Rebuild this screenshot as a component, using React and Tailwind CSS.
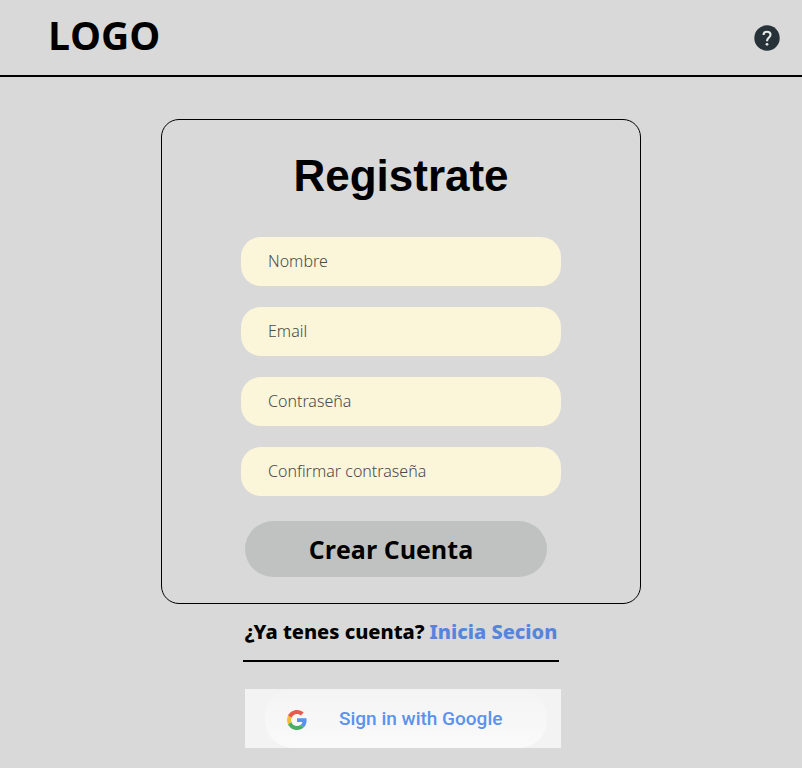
import React from "react";

const fields = [
  { id: "nombre", label: "Nombre", type: "text" },
  { id: "email", label: "Email", type: "email" },
  { id: "contrasena", label: "Contraseña", type: "password" },
  { id: "confirmar", label: "Confirmar contraseña", type: "password" },
];

function HelpIcon() {
  return (
    <svg viewBox="0 0 26 26" className="size-[26px]" aria-hidden="true">
      <circle cx="13" cy="13" r="12.7" fill="#263238" />
      <path
        d="M9.5 10.1C9.5 8 10.9 6.7 13 6.7s3.5 1.3 3.5 3.1c0 2.8-3.5 2.9-3.5 6.4"
        fill="none"
        stroke="#e4e7e7"
        strokeWidth="2.1"
      />
      <circle cx="13" cy="19.3" r="1.4" fill="#e4e7e7" />
    </svg>
  );
}

function GoogleIcon() {
  return (
    <svg viewBox="0 0 48 48" className="size-5" aria-hidden="true">
      <path fill="#e9594d" d="M24 9.5c3.54 0 6.71 1.22 9.21 3.6l6.85-6.85C35.9 2.38 30.47 0 24 0 14.62 0 6.51 5.38 2.56 13.22l7.98 6.19C12.43 13.72 17.74 9.5 24 9.5z" />
      <path fill="#5a92ee" d="M46.98 24.55c0-1.57-.15-3.09-.38-4.55H24v9.02h12.94c-.58 2.96-2.26 5.48-4.78 7.18l7.73 6c4.51-4.18 7.09-10.36 7.09-17.65z" />
      <path fill="#f5bf2c" d="M10.53 28.59c-.48-1.45-.76-2.99-.76-4.59s.27-3.14.76-4.59l-7.98-6.19C.92 16.46 0 20.12 0 24s.92 7.54 2.56 10.78l7.97-6.19z" />
      <path fill="#48ae62" d="M24 48c6.48 0 11.93-2.13 15.89-5.81l-7.73-6c-2.15 1.45-4.92 2.3-8.16 2.3-6.26 0-11.57-4.22-13.47-9.91l-7.98 6.19C6.51 42.62 14.62 48 24 48z" />
    </svg>
  );
}

// The label rests inside the field and hides once something is typed.
function Field({ id, label, type }) {
  return (
    <div className="grid items-center font-['Noto_Sans',sans-serif] text-base font-light">
      <input
        id={id}
        name={id}
        type={type}
        placeholder=" "
        className="peer col-start-1 row-start-1 h-[49px] w-full rounded-[20px] bg-[#fbf5da] px-[27px]"
      />
      <label
        htmlFor={id}
        className="pointer-events-none invisible z-10 col-start-1 row-start-1 mb-[2px] ml-[27px] justify-self-start text-[#4a4a4a] peer-placeholder-shown:visible"
      >
        {label}
      </label>
    </div>
  );
}

export default function App() {
  return (
    <div className="min-h-screen bg-[#d9d9d9] pb-5 font-['Open_Sans',sans-serif] text-black">
      <header className="flex items-center justify-between border-b-2 border-black pt-[7px] pr-[22px] pb-[13px] pl-12">
        <div className="text-[39px] leading-[55px] font-bold">LOGO</div>
        <button type="button" aria-label="Ayuda" className="mt-[6px] rounded-full">
          <HelpIcon />
        </button>
      </header>

      <main className="flex flex-col items-center px-4 pt-[42px]">
        <form
          className="w-full max-w-[480px] rounded-[18px] border border-black px-4 pt-[30px] pb-[26px]"
          onSubmit={(event) => event.preventDefault()}
        >
          <h1 className="text-center font-['Liberation_Sans',Arial,sans-serif] text-[44px] leading-[52px] font-bold">
            Registrate
          </h1>
          <div className="mx-auto mt-[35px] flex max-w-[320px] flex-col gap-[21px]">
            {fields.map((field) => (
              <Field key={field.id} {...field} />
            ))}
          </div>
          <div className="mx-auto mt-[25px] max-w-[320px] pr-[14px] pl-1">
            <button
              type="submit"
              className="h-14 w-full rounded-full bg-[#bfc2c1] pt-[2px] pr-[10px] text-center text-[25px] font-bold"
            >
              Crear Cuenta
            </button>
          </div>
        </form>

        <p className="mt-3 flex w-full max-w-[316px] justify-center gap-[5px] border-b-2 border-black pb-[12px] font-['Noto_Sans',sans-serif] text-xl leading-8 font-extrabold whitespace-nowrap">
          <span>¿Ya tenes cuenta?</span>
          <a href="#inicia" className="text-[#5585dc]">
            Inicia Secion
          </a>
        </p>

        <div className="mt-[27px] w-full max-w-[320px] pl-1">
          <button type="button" className="block h-[59px] w-full bg-[#f3f3f3] pr-[14px] pl-5">
            <span className="flex h-full items-center rounded-[28px] bg-linear-to-b from-[#f4f4f4] to-[#fafafa] pt-[2px] pl-[22px] font-['Roboto',sans-serif] text-[19px] font-medium text-[#5a92ee]">
              <GoogleIcon />
              <span className="ml-8">Sign in with Google</span>
            </span>
          </button>
        </div>
      </main>
    </div>
  );
}
